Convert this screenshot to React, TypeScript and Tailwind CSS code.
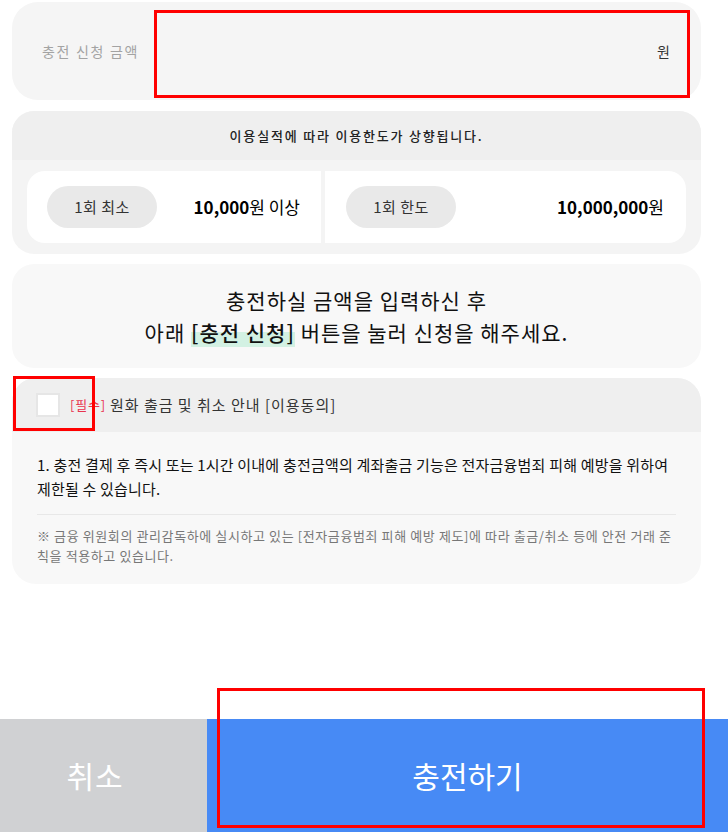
import React from "react";

export default function App() {
  return (
    <div
      className="relative flex min-h-[832px] w-[728px] flex-col bg-white"
      style={{ fontFamily: '"Noto Sans CJK KR", "Noto Sans", sans-serif' }}
    >
      <div className="ml-3 flex w-[689px] flex-col gap-[10px] pt-[2px]">
        {/* amount input */}
        <div className="flex h-[98px] items-center rounded-[26px] bg-[#f5f5f5] pl-[30px] pr-[31px]">
          <span className="text-[14px] tracking-[1.7px] text-[#a3a3a3]">충전 신청 금액</span>
          <span className="ml-auto text-[14px] text-[#333]">원</span>
        </div>

        {/* limits */}
        <div className="mt-[1px] overflow-hidden rounded-[22px] bg-[#f4f4f4]">
          <div className="flex h-[49px] items-center justify-center bg-[#efefef] text-[13px] font-medium tracking-[1.8px] text-[#222]">
            이용실적에 따라 이용한도가 상향됩니다.
          </div>
          <div className="px-[15px] pb-[11px] pt-[11px]">
            <div className="flex h-[72px] gap-[4px]">
              <div className="flex w-[294px] items-center rounded-l-[18px] bg-white pl-[20px] pr-[21px]">
                <span className="flex h-[42px] w-[110px] items-center justify-center rounded-full bg-[#e9e9e9] text-[15px] tracking-[0.5px] text-[#333]">
                  1회 최소
                </span>
                <span className="ml-auto text-[17px] text-black">
                  <b className="font-bold">10,000</b>원 이상
                </span>
              </div>
              <div className="flex flex-1 items-center rounded-r-[18px] bg-white pl-[21px] pr-[22px]">
                <span className="flex h-[42px] w-[110px] items-center justify-center rounded-full bg-[#e9e9e9] text-[15px] tracking-[0.5px] text-[#333]">
                  1회 한도
                </span>
                <span className="ml-auto text-[17px] text-black">
                  <b className="font-bold">10,000,000</b>원
                </span>
              </div>
            </div>
          </div>
        </div>

        {/* instructions */}
        <div className="flex h-[104px] flex-col items-center justify-center rounded-[22px] bg-[#f8f8f8] text-[21px] leading-[32px] tracking-[1px] text-[#111]">
          <p>충전하실 금액을 입력하신 후</p>
          <p>
            아래{" "}
            <span className="bg-[linear-gradient(transparent_50%,#d3f1e3_50%)] font-medium">
              [충전 신청]
            </span>{" "}
            버튼을 눌러 신청을 해주세요.
          </p>
        </div>

        {/* agreement */}
        <div className="overflow-hidden rounded-[24px] bg-[#f8f8f8]">
          <div className="flex h-[54px] items-center bg-[#efefef] pl-[24px]">
            <span className="h-[24px] w-[24px] border-2 border-[#e6e6e6] bg-white" />
            <span className="ml-[10px] text-[13px] tracking-[0.8px] text-[#e8344e]">[필수]</span>
            <span className="ml-[4px] text-[15px] tracking-[1px] text-[#333]">원화 출금 및 취소 안내 [이용동의]</span>
          </div>
          <div className="px-[25px] pb-[18px] pt-[21px]">
            <p className="text-[15px] leading-[24px] tracking-[0.2px] text-[#111]">
              1. 충전 결제 후 즉시 또는 1시간 이내에 충전금액의 계좌출금 기능은 전자금융범죄 피해 예방을 위하여 제한될 수 있습니다.
            </p>
            <div className="mb-[11px] mt-[13px] h-px bg-[#e8e8e8]" />
            <p className="text-[13px] leading-[20px] tracking-[0.6px] text-[#777]">
              ※ 금융 위원회의 관리감독하에 실시하고 있는 [전자금융범죄 피해 예방 제도]에 따라 출금/취소 등에 안전 거래 준칙을 적용하고 있습니다.
            </p>
          </div>
        </div>
      </div>

      {/* bottom buttons */}
      <div className="mt-auto flex h-[113px]">
        <button className="flex w-[207px] items-center justify-center bg-[#d0d1d3] pr-[17px] text-[30px] tracking-[1px] text-white">
          취소
        </button>
        <button className="flex flex-1 items-center justify-center bg-[#478af5] text-[30px] text-white">
          충전하기
        </button>
      </div>

      {/* red annotation boxes */}
      <div className="pointer-events-none absolute left-[154px] top-[10px] h-[88px] w-[536px] border-[3px] border-[#ff0000]" />
      <div className="pointer-events-none absolute left-[13px] top-[376px] h-[55px] w-[82px] border-[3px] border-[#ff0000]" />
      <div className="pointer-events-none absolute left-[217px] top-[688px] h-[140px] w-[488px] border-[3px] border-[#ff0000]" />
    </div>
  );
}
